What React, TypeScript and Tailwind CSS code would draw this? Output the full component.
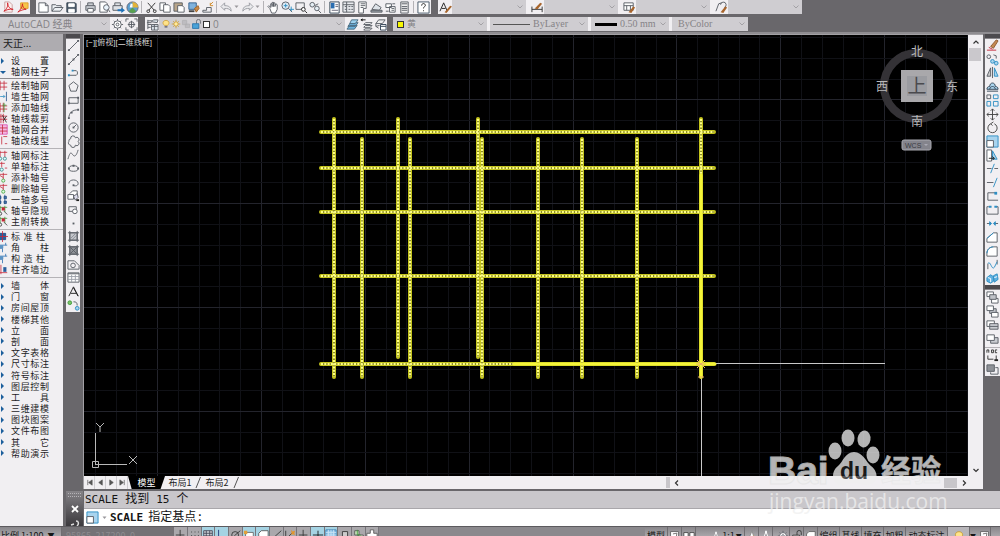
import React from "react";

type Shape = [d: string, stroke: string, fill?: string];

const K = "#5a5e66";
const B = "#2f8fc4";
const L = "#a9d4ee";
const R = "#c5283a";
const G = "#3f9a3a";
const N = "none";

// all drawn on a 14 x 14 grid
const icons: Record<string, Shape[]> = {
  pdf: [["M3 1h5l3 3v8H3z", "#c9a0a0", "#fbeeee"], ["M2 11c3-2 5-6 4-9 0 4 3 7 6 7-4-1-8 1-10 2z", "#d2232a", N]],
  pdfMail: [["M5 2h8v6H5z", "#e0a030", "#f6c64a"], ["M2 12c2-2 5-5 5-9 0 3 1 5 4 6-3 0-6 1-9 3", "#d2232a", N]],
  newFile: [["M2 2h7l3 3v7H2z", K, "#fff"], ["M9 2v3h3", K]],
  open: [["M1 11V4h4l1 1h5v2M1 11l3-4h9l-3 4z", K, "#eef1f4"]],
  save: [["M2 2h9l1 1v9H2z", "#34414f", "#52606e"], ["M4 3h6v3H4zM4 9h6v3H4z", "#fff", "#fff"]],
  print: [["M4 5V2h6v3M2 5h10v5H2z", K, "#c9ccd1"], ["M4 8h6v4H4z", K, "#fff"]],
  preview: [["M2 1h6l2 2v9H2z", K, "#fff"], ["M6 7a3 3 0 1 0 6 0a3 3 0 1 0-6 0M11 9l2 3", K, "#e8f2fa"]],
  publish: [["M3 5V2h6v3M1 5h10v5H1z", K, "#dfe2e6"], ["M6 9h4V7l4 3-4 3v-2H6z", N, "#1f72b8"]],
  pie: [["M1 7a6 6 0 1 0 12 0a6 6 0 1 0-12 0", "#667", "#5b9fd0"], ["M7 7V1a6 6 0 0 1 6 6z", N, "#e2b33a"], ["M7 7L3 11a6 6 0 0 0 8 0z", N, "#59a14f"], ["M5 3h2v4H4z", N, "#fff"]],
  cut: [["M3 2l7 8M11 2L4 10", "#333"], ["M2 11a1.500 1.500 0 1 0 3 0a1.500 1.500 0 1 0-3 0M9 11a1.500 1.500 0 1 0 3 0a1.500 1.500 0 1 0-3 0", "#333"]],
  copy: [["M1 2h6v8H1z", K, "#fff"], ["M5 4h5l2 2v6H5z", K, "#fff"]],
  paste: [["M1 2h9v9H1z", K, "#b9a58a"], ["M5 5h5l2 2v5H5z", K, "#fff"]],
  match: [["M2 2h8v7H2z", "#35618c", "#7fb2dd"], ["M2 10h6v2H2z", N, "#444"], ["M8 8l4-3 1 3-3 4z", "#a06428", "#c98a48"]],
  edit: [["M2 10h4V7h5v5H2z", K], ["M10 4l3-3M10 2v3h3", "#d08a28"]],
  undo: [["M1 6l4-4v3c5 0 7 2 7 6-2-3-4-3-7-3v2z", "#9a9da3", "#e9e9ec"]],
  redo: [["M13 6L9 2v3c-5 0-7 2-7 6 2-3 4-3 7-3v2z", "#9a9da3", "#e9e9ec"]],
  pan: [["M3 8L1 6l1-1 2 2V3h1.500v3V1.500H7V6V2h1.500v4l1-3L11 4v5l-2 4H5z", K, "#fff"]],
  zoom: [["M1 5a4 4 0 1 0 8 0a4 4 0 1 0-8 0M8 8l4 4", K, "#dcebf6"], ["M5 3v4M3 5h4M11 6v5M9 9h5", B]],
  zoomWin: [["M1 2h9v7H1z", K], ["M7 9a2 2 0 1 0 4 0a2 2 0 1 0-4 0M11 11l2 2", "#222", "#fff"]],
  zoomPrev: [["M1 4a2.500 2.500 0 1 0 5 0a2.500 2.500 0 1 0-5 0M6 8a2.500 2.500 0 1 0 5 0a2.500 2.500 0 1 0-5 0M10 10l3 3M6 5l4-2", K, "#e4edf4"]],
  props: [["M2 1h10v12H2z", "#345", "#fff"], ["M3 2h4v6H3z", N, "#2a6db0"], ["M8 4h3M8 6h3M4 10h7", "#667"]],
  center: [["M1 1h12v11H1z", K, "#e8eaee"], ["M1 4h12M3 6h2M7 6h2M10 6h2M3 9h2M7 9h2M10 9h2M5 1v11", K]],
  palette: [["M3 1h8v7H8v5H3z", K, "#fff"], ["M5 3h5M5 5h5M5 7h3", K]],
  sheets: [["M2 9l4-6 6 4-2 3z", K, "#dde2e8"], ["M1 10h12v2H1z", K, "#9aa0a8"]],
  markup: [["M2 3h6v4H2zM6 6h6v6H6z", K, "#fff"], ["M2 11h3M9 3h3M8 8h3M8 10h3", K]],
  calc: [["M3 1h8v12H3z", K, "#eee"], ["M4 3h6M4 6h6M4 8h6M4 10h6", K]],
  help: [["M1 1h12v12H1z", "#456", "#fff"], ["M5 5c0-3 4-3 4 0 0 1-2 1-2 3M7 10v1", "#222"]],
  textStyle: [["M1 11L5 2l4 9M3 8h4", "#222"], ["M6 12l6-7 2 1-6 7z", N, "#a8652c"]],
  dimStyle: [["M1 6v6M12 6v6M1 9h11", "#333"], ["M4 8l6-6 2 1-5 6z", N, "#a8652c"]],
  tableStyle: [["M1 2h10v8H1zM1 5h10M4 5v5M8 5v5", K, "#fff"], ["M6 12l5-6 2 1-4 6z", N, "#a8652c"]],
  leaderStyle: [["M1 11l3-8 3-1M6 4a3 3 0 1 1 4 3", K], ["M6 12l5-6 2 1-4 6z", N, "#a8652c"]],
  gear: [["M7 1v2M7 11v2M1 7h2M11 7h2M3 3l1 1M10 10l1 1M3 11l1-1M10 4l1-1", K], ["M3 7a4 4 0 1 0 8 0a4 4 0 1 0-8 0", K, "#fff"], ["M5.500 7a1.500 1.500 0 1 0 3 0a1.500 1.500 0 1 0-3 0", K]],
  gearFrame: [["M1 1h3M1 1v3M13 1h-3M13 1v3M1 13h3M1 13v-3M13 13h-3M13 13v-3", K], ["M4 7a3 3 0 1 0 6 0a3 3 0 1 0-6 0M7 3v8M3 7h8", K]],
  layers: [["M2 3h5M1 5h5M2 2v10M2 7h4M2 10h3", K], ["M6 4l2-2h5l-1 3zM6 7h7v6H6zM6 9h7M9 7v6", K, "#dfe7ee"]],
  layerCur: [["M1 12l3-4h8l-3 4zM2 9l3-4h8l-3 4z", "#4a6a80", "#6bb2dd"], ["M4 6l2-4h7l-3 4z", "#4a6a80", "#9bd0ee"]],
  layerPrev: [["M4 7l2-2h7l-2 2zM4 10l2-2h7l-2 2zM4 13l2-2h7l-2 2z", K, "#fff"], ["M1 2h5M1 2l2-1M1 2l2 1", "#111"]],
  layerState: [["M2 6l3-4h7l-3 4zM2 6v3l3 2M2 9l4-1", K, "#eee"], ["M7 7h6v6H7zM7 9h6", "#345", "#fff"]],
  bulb: [["M5 9c-4-3-2-7 2-7s6 4 2 7z", "#c99a2c", "#ffe38a"], ["M5 10h4v2H5z", N, "#667"]],
  sun: [["M7 1v12M1 7h12M3 3l8 8M11 3l-8 8", "#c99a2c"], ["M4 7a3 3 0 1 0 6 0a3 3 0 1 0-6 0", "#c99a2c", "#ffeaa0"]],
  freeze: [["M2 2h6v6H2zM6 7h6v5H6z", "#b0afb2", "#bdbcc0"]],
  unlock: [["M7 6V3a2.500 2.500 0 0 1 5 0v3", K], ["M2 6h8v6H2z", "#1e6ea8", "#4aa3d8"]],
  lockGray: [["M7 6V3a2.500 2.500 0 0 1 5 0v3", "#333"], ["M2 6h8v6H2z", "#333", "#ddd"]],
  line: [["M2 12L12 2", K], ["M1 11h2v2H1zM11 1h2v2h-2z", N, K]],
  xline: [["M2 12L12 2", K], ["M1 11h2v2H1zM6 6h2v2H6zM11 1h2v2h-2z", N, K]],
  pline: [["M2 10h8a3 3 0 0 0 0-5H6", K], ["M1 9h2v2H1zM5 4h2v2H5z", N, B]],
  polygon: [["M7 2l5 4-2 6H4L2 6z", K]],
  rect: [["M2 4h10v6H2z", K], ["M1 9h2v2H1zM11 3h2v2h-2z", N, K]],
  arc: [["M2 12c0-6 4-9 10-9", K], ["M1 11h2v2H1zM4 5h2v2H4zM11 2h2v2h-2z", N, K]],
  circle: [["M2 7a5 5 0 1 0 10 0a5 5 0 1 0-10 0M7 7l3-3", K], ["M6 6h2v2H6z", N, K]],
  cloud: [["M4 4a2.500 2.500 0 0 1 5-1 2.500 2.500 0 0 1 3 4 2.500 2.500 0 0 1-3 4 2.500 2.500 0 0 1-5 0 2.500 2.500 0 0 1-2-4 2.500 2.500 0 0 1 2-3z", K]],
  spline: [["M1 12c2-7 3-8 5-5s4 2 6-5", K]],
  ellipse: [["M2 7a5 3 0 1 0 10 0a5 3 0 1 0-10 0", K], ["M6 3h2v2H6zM1 6h2v2H1zM11 6h2v2h-2z", N, K]],
  ellArc: [["M2 8c0-5 10-5 10 0 0 3-4 3-5 2", K], ["M6 9h2v2H6z", N, K]],
  insert: [["M3 5l3-3h5v4M1 6h6v5H1z", K, "#fff"], ["M7 8l4-3 1 4-3 3z", K, "#dde"], ["M10 11h3v2h-3z", N, "#222"]],
  block: [["M2 4h8v5H2z", K], ["M6 9a2.500 2.500 0 1 0 5 0a2.500 2.500 0 1 0-5 0", K, "#fff"]],
  point: [["M6 6h2v2H6z", N, K]],
  hatch: [["M3 3h8v8H3z", K, "#c4c6cb"], ["M4 9l5-5M5 11l6-6", "#8b8f97"], ["M1 3h12M1 11h12M3 1v12M11 1v12", K]],
  gradient: [["M3 3h8v8H3z", K, "#8f9298"], ["M4 4l6 6M10 4l-6 6M1 3h12M1 11h12M3 1v12M11 1v12", K]],
  region: [["M1 12V3h7l5 5v4z", K], ["M4 8a2.500 2.500 0 1 0 5 0a2.500 2.500 0 1 0-5 0", K]],
  table: [["M1 2h12v10H1z", K, "#fff"], ["M1 3h12", K], ["M1 6h12M1 9h12M5 4v8M9 4v8", "#9b9fa7"]],
  mtext: [["M2 12L7 2l5 10M4 9h6M7 3l5 9", "#222"]],
  addSel: [["M1 4a2 2 0 1 0 4 0a2 2 0 1 0-4 0", G, "#7fc56a"], ["M9 10a2 2 0 1 0 4 0a2 2 0 1 0-4 0", B, L], ["M7 3c3 0 4 1 4 4", K]],
  erase: [["M5 8l6-7 2 1-5 8z", "#8d5a32", "#c58a52"], ["M3 9l4 2M1 12h10", R]],
  copyObj: [["M1 4a2 2 0 1 0 4 0a2 2 0 1 0-4 0M8 2l3 1v3", K], ["M5 9a2 2 0 1 0 4 0a2 2 0 1 0-4 0M9 11a2 2 0 1 0 4 0a2 2 0 1 0-4 0", B, L]],
  mirror: [["M5 2v9H1z", K, "#ccc"], ["M9 2v9h4z", B, L], ["M7 1v12", K]],
  offset: [["M1 10c0-2 1-3 3-3 0-5 6-5 6 0 2 0 3 1 3 3z", "#345", L], ["M4 10c0-4 6-4 6 0M1 12h12", "#345"]],
  array: [["M1 1h4v4H1z", K], ["M8 1h5v4H8zM1 8h4v5H1zM8 8h5v5H8z", B]],
  move: [["M7 1v12M1 7h12M5 3l2-2 2 2M5 11l2 2 2-2M3 5L1 7l2 2M11 5l2 2-2 2", "#444"]],
  rotate: [["M5 3a5 5 0 1 0 4 0M5 3l3-2M5 3l2 2", "#444"]],
  scale: [["M1 1h12v12H1z", B, L], ["M1 6h7v7H1z", K, "#fff"]],
  stretch: [["M1 1h5v12H1z", K, "#fff"], ["M7 2l5 9H7z", B, L], ["M3 10h6M7 8l2 2-2 2", "#222"]],
  trim: [["M5 12l4-10", B], ["M1 7h5M9 7h4", K]],
  extend: [["M8 12l4-10", B], ["M1 7h7", K]],
  breakPt: [["M11 3H2v8h11", K], ["M9 2h3v3H9z", N, B]],
  breakObj: [["M3 4H1v8h12V4h-2", K], ["M3 3h3v2H3zM9 3h3v2H9z", N, B]],
  join: [["M1 7h4M9 7h4", K], ["M4 5l2 2-2 2zM10 5L8 7l2 2z", B, B]],
  chamfer: [["M1 12V8l7-6h4v10z", K, "#fff"], ["M1 8l7-6", B]],
  fillet: [["M1 12V9c0-4 3-7 7-7h4v10z", K, "#fff"], ["M1 9c0-4 3-7 7-7", B]],
  blend: [["M2 12V6M12 7V2", K], ["M2 6c3-4 4 8 7 4l3-6", B]],
  explode: [["M1 6l4-3 3 2v5l-3 2-4-2zM8 4l4-2 1 6-4 3z", B, "#5fb0e0"], ["M2 6l3 1M5 7v4M9 6l3-1", "#fff"]],
  front: [["M1 1h7v5H1zM6 8h7v5H6z", K, "#fff"], ["M4 4h7v5H4z", K, "#bfc2c8"]],
  back: [["M4 4h7v5H4z", K, "#bfc2c8"], ["M1 1h7v5H1zM6 8h7v5H6z", K, "#fff"]],
  above: [["M1 2h8v6H1z", K, "#fff"], ["M4 5h9v6H4zM4 8h9", K, "#c9ccd1"]],
  under: [["M5 5h8v6H5z", K, "#c9ccd1"], ["M1 2h8v6H1z", K, "#fff"]],
  textFront: [["M1 4V1h2v3M6 1v3h2V1zM12 1h-2v3h2M2 7v4h6M11 7v5", "#333"], ["M9 11h4v2H9z", N, "#222"]],
  hatchBack: [["M1 2h8v7H1z", K, "#8f9298"], ["M10 5h3v7H5v-2", K]],
  // axis-grid commands
  axis: [["M1 4h12M1 9h12M4 1v12M9 1v12", R]],
  wallAxis: [["M3 1v12M12 1v12", "#234f86"], ["M4 7h6M8 5l2 2-2 2", B]],
  axisAdd: [["M1 5h12M1 9h12M4 1v12M8 1v12", R], ["M9 1v12M7 4h5", G]],
  axisCut: [["M1 4h12M1 8h12M5 1v12M8 1v12", R], ["M7 3l5 9M12 4l-4 6", "#222"]],
  axisMerge: [["M1 1h12v12H1z", "#d94bb0", "#f4b6e2"], ["M1 5h12M7 1v12M1 9h12", R]],
  axisType: [["M2 2v8l-1 2M6 2v10M8 2h5M10 11h3", R]],
  axisDim: [["M1 3h12M4 1v8M10 1v8", R], ["M2 11a2 2 0 1 0 4 0a2 2 0 1 0-4 0M8 11a2 2 0 1 0 4 0a2 2 0 1 0-4 0", "#2b7f86", "#dff"]],
  axisOne: [["M1 3h9M6 1v7M10 9h3", R], ["M4 11a2 2 0 1 0 4 0a2 2 0 1 0-4 0", "#2b7f86", "#dff"]],
  axisNo: [["M1 3h12M8 1v8M3 4l5 3", R], ["M6 11a2 2 0 1 0 4 0a2 2 0 1 0-4 0", G, "#dfd"]],
  axisMany: [["M2 3h3v3H2zM9 3h3v3H9zM2 9h3v3H2zM9 9h3v3H9z", "#234f86", "#5b83b8"], ["M4 1v12M10 1v12", "#234f86"]],
  axisHide: [["M1 3h12M4 1v8M10 1v8", G], ["M2 11a2 2 0 1 0 4 0a2 2 0 1 0-4 0M9 8l4 4", "#333"], ["M6 3h4v4H6z", N, R]],
  column: [["M3 3h8v8H3z", "#16457e", "#2a5f9e"], ["M7 0v14M0 7h14", R]],
  corner: [["M1 4h12M1 8h6v5M11 1v3", "#2a6db0"], ["M1 4h7v4H1z", N, "#5c93c4"]],
  colAlign: [["M5 1v12M0 11h13", R], ["M8 4h4v6H8z", N, "#2a5f9e"]],
  pad: [["M2 2h10v10H2z", "#445", "#cfd3da"], ["M2 5h10M2 8h10M5 2v10M9 2v10", "#445"]],
  snap: [["M6 1v11M1 7h10M9 10l3 3", "#333"]],
  dots: [["M3 3v1M7 3v1M11 3v1M3 7v1M7 7v1M11 7v1M3 11v1M7 11v1M11 11v1", "#333"]],
  ortho: [["M3 1v10h10", "#237"]],
  polar: [["M2 7a4 4 0 1 0 8 0a4 4 0 1 0-8 0M5 8l7-6", "#333"]],
  osnap: [["M3 4h9v9H3z", "#666", "#fff"], ["M1 2h4v4H1z", N, "#e3a13a"]],
  osnap3: [["M2 5l3-3h8v8l-3 3H2z", "#555", "#fff"]],
  angle: [["M12 2L2 11h10", "#333"]],
  ducs: [["M2 2v10l7-7", "#333"], ["M8 1l2 2 3-1-1 3 1 2-3-1-2 1 1-2z", N, "#e3952a"]],
  plus: [["M5 1h4v4h4v4H9v4H5V9H1V5h4z", "#555", "#fff"]],
  lwt: [["M7 2v10M1 7h12", "#111"]],
  paperGrid: [["M1 1h12v12H1z", "#3b7db0", "#8fc4e8"], ["M1 4h12M1 7h12M1 10h12M4 1v12M7 1v12M10 1v12", "#c9e3f4"]],
  quick: [["M4 3h6v10H4z", "#333", "#ccc"]],
  cycle: [["M2 2h5v5H2zM6 7h6v5H6z", "#555", "#cfe9c2"], ["M5 1v6h4", G]],
  layout: [["M2 2h10v10H2z", "#555", "#fff"], ["M5 5l5-1-1 7", "#555"]],
  views: [["M1 3h5v6H1zM8 3h5v6H8z", "#444", "#fff"]],
  person: [["M7 2l4 10M7 2L3 12M4 9h6", "#fff"], ["M6 1h2v3H6z", N, "#fff"]],
  star: [["M7 1l3 10H3z", "#888", "#fff"], ["M9 6l1 2 3 0-2 2 1 3-3-1-2 1 0-3-2-2h3z", N, "#edb13c"]],
};

function Icon({ name, className = "size-[13px]" }: { name: string; className?: string }) {
  return (
    <svg viewBox="0 0 14 14" className={`${className} shrink-0`} aria-hidden="true">
      {icons[name].map(([d, stroke, fill], i) => (
        <path key={i} d={d} stroke={stroke} fill={fill ?? "none"} strokeWidth="1" />
      ))}
    </svg>
  );
}

function Tool({ name }: { name: string }) {
  return (
    <button type="button" aria-label={name} className="flex h-[13px] w-[14px] shrink-0 items-center justify-center self-center">
      <Icon name={name} />
    </button>
  );
}

function Chevron({ className = "" }: { className?: string }) {
  return (
    <svg viewBox="0 0 8 6" className={`pointer-events-none h-[6px] w-[8px] shrink-0 ${className}`} aria-hidden="true">
      <path d="M1.500 1.500L4 4l2.500-2.500" stroke="#a3a1a5" fill="none" />
    </svg>
  );
}

function Caret() {
  return (
    <svg viewBox="0 0 7 4" className="h-[4px] w-[7px] shrink-0" aria-hidden="true">
      <path d="M1.500 0.500h4l-2 2.500z" fill="#9a989c" />
    </svg>
  );
}

const Sep = () => <span className="mx-[2px] h-[12px] w-px shrink-0 bg-[#b4b2b6]" />;

type ComboProps = { label: string; value?: string; className: string; children?: React.ReactNode };

function Combo({ label, value = "", className, children }: ComboProps) {
  return (
    <label className={`flex h-[14px] shrink-0 items-center bg-[#cfcdd1] pr-[2px] text-[#858387] ${className}`}>
      {children}
      <select aria-label={label} className="h-[14px] min-w-0 flex-1 appearance-none bg-transparent leading-[14px] outline-none">
        <option>{value}</option>
      </select>
      <Chevron />
    </label>
  );
}

const standardTools = [
  ["newFile", "open", "save"],
  ["print", "preview", "publish", "pie"],
  ["cut", "copy", "paste", "match", "edit"],
];
const drawTools = [
  "line", "xline", "pline", "polygon", "rect", "arc", "circle", "cloud", "spline", "ellipse",
  "ellArc", "insert", "block", "point", "hatch", "gradient", "region", "table", "mtext", "addSel",
];
const modifyTools = [
  "erase", "copyObj", "mirror", "offset", "array", "move", "rotate", "scale", "stretch",
  "trim", "extend", "breakPt", "breakObj", "join", "chamfer", "fillet", "blend", "explode",
];

function Toolbars() {
  return (
    <header className="flex h-[34px] shrink-0 flex-col gap-[3px] border-b-2 border-[#8f8d91] bg-[#69676b]">
      <div className="flex h-[14px]">
        <div className="flex w-[30px] shrink-0 items-center justify-between bg-[#f1eff2] px-px">
          <Tool name="pdf" />
          <Tool name="pdfMail" />
        </div>
        <div className="ml-[6px] flex w-[395px] shrink-0 items-center bg-[#f1eff2]">
          {standardTools.map((group) => (
            <React.Fragment key={group[0]}>
              {group.map((t) => <Tool key={t} name={t} />)}
              <Sep />
            </React.Fragment>
          ))}
          <Tool name="undo" />
          <Caret />
          <Tool name="redo" />
          <Caret />
          <Sep />
          {["pan", "zoom", "zoomWin", "zoomPrev"].map((t) => <Tool key={t} name={t} />)}
          <Sep />
          {["props", "center", "palette", "sheets", "markup", "calc"].map((t) => <Tool key={t} name={t} />)}
          <Sep />
          <Tool name="help" />
        </div>
        <div className="ml-[7px] flex shrink-0 items-center bg-[#f1eff2]">
          <Tool name="textStyle" />
          <Combo label="Text style" className="w-[74px]" />
          <span className="w-[4px]" />
          <Tool name="dimStyle" />
          <Combo label="Dimension style" className="w-[74px]" />
          <span className="w-[4px]" />
          <Tool name="tableStyle" />
          <Combo label="Table style" className="w-[74px]" />
          <span className="w-[4px]" />
          <Tool name="leaderStyle" />
          <Combo label="Multileader style" className="w-[74px]" />
        </div>
      </div>
      <div className="flex h-[14px] text-[10px]">
        <div className="flex shrink-0 bg-[#f1eff2]">
          <Combo label="Workspace" value="AutoCAD 经典" className="w-[110px] pl-[8px] font-['Open_Sans','Noto_Sans_CJK_SC',sans-serif]" />
          <Tool name="gear" />
          <Tool name="gearFrame" />
        </div>
        <div className="ml-[7px] flex shrink-0 bg-[#f1eff2]">
          <Tool name="layers" />
          <Combo label="Layer" value="0" className="w-[186px] pl-[2px] font-['Open_Sans',sans-serif]">
            <Icon name="bulb" className="size-[10px]" />
            <Icon name="sun" className="size-[10px]" />
            <Icon name="freeze" className="size-[10px]" />
            <Icon name="unlock" className="size-[11px]" />
            <span className="mr-[3px] ml-px size-[7px] border border-[#333] bg-white" />
          </Combo>
          <Tool name="layerCur" />
          <Tool name="layerPrev" />
          <Tool name="layerState" />
        </div>
        <div className="ml-[6px] flex shrink-0 gap-[3px] bg-[#f1eff2] font-['Liberation_Serif','Noto_Sans_CJK_SC',serif]">
          <Combo label="Color" value="黄" className="w-[94px] pl-[4px] text-[9px]">
            <span className="mr-[3px] size-[7px] border border-[#333] bg-[#f7f700]" />
          </Combo>
          <Combo label="Linetype" value="ByLayer" className="w-[98px] pl-[3px]">
            <span className="mr-[3px] h-px w-[37px] bg-[#555]" />
          </Combo>
          <Combo label="Lineweight" value="0.50 mm" className="w-[78px] pl-[4px]">
            <span className="mr-[3px] h-[3px] w-[22px] bg-black" />
          </Combo>
          <Combo label="Plot style" value="ByColor" className="w-[76px] pl-[6px]" />
        </div>
      </div>
    </header>
  );
}

const commandGroups = [
  [["axis", "绘制轴网"], ["wallAxis", "墙生轴网"], ["axisAdd", "添加轴线"], ["axisCut", "轴线裁剪"], ["axisMerge", "轴网合并"], ["axisType", "轴改线型"]],
  [["axisDim", "轴网标注"], ["axisOne", "单轴标注"], ["axisNo", "添补轴号"], ["axisNo", "删除轴号"], ["axisMany", "一轴多号"], ["axisHide", "轴号隐现"], ["axisHide", "主附转换"]],
  [["column", "标准柱"], ["corner", "角柱"], ["corner", "构造柱"], ["colAlign", "柱齐墙边"]],
];
const menus = [
  "墙体", "门窗", "房间屋顶", "楼梯其他", "立面", "剖面", "文字表格", "尺寸标注",
  "符号标注", "图层控制", "工具", "三维建模", "图块图案", "文件布图", "其它", "帮助演示",
];

function PaletteRow({ label, icon, open }: { label: string; icon?: string; open?: boolean }) {
  return (
    <button type="button" aria-label={label} className="flex h-[11px] w-full items-center leading-[11px]">
      <span className="flex w-[11px] shrink-0 items-center">
        {icon ? (
          <Icon name={icon} className="-ml-[3px] size-[11px]" />
        ) : (
          <svg viewBox="0 0 6 6" className="size-[6px]" aria-hidden="true">
            <path d={open ? "M0 2h6L3 5z" : "M1 0v6l3-3z"} fill="#1c5f9c" />
          </svg>
        )}
      </span>
      <span className={label.length === 3 ? "flex w-[34px] justify-between" : "flex w-[38px] justify-between"}>
        {[...label].map((c, i) => <span key={i}>{c}</span>)}
      </span>
    </button>
  );
}

function CommandPalette() {
  return (
    <aside className="w-[63px] shrink-0 bg-[#f1eff2] font-['Noto_Sans_CJK_SC',sans-serif] text-[9px] text-[#1d1d1f]">
      <h2 className="flex h-[17px] items-center bg-[#aeacb0] pl-[3px] text-[10px]">天正...</h2>
      <div className="border-b border-[#8d8b8f] pt-[4px] pb-px">
        <PaletteRow label="设置" />
        <PaletteRow label="轴网柱子" open />
      </div>
      {commandGroups.map((group) => (
        <div key={group[0][1]} className="border-b border-[#b5b3b7] pt-px pb-[2px]">
          {group.map(([icon, label]) => <PaletteRow key={label} icon={icon} label={label} />)}
        </div>
      ))}
      <nav className="flex h-[181px] flex-col justify-between pt-[2px]">
        {menus.map((m) => <PaletteRow key={m} label={m} />)}
      </nav>
    </aside>
  );
}

const Grip = () => <span className="h-[5px] shrink-0 border-b border-[#8a888c] bg-[#4c4a4e]" />;

// axis lines: [x, top, bottom] and [y]
const columns = [
  [250, 84, 342], [278, 104, 342], [314, 84, 322], [326, 104, 342], [394, 84, 322],
  [398, 104, 342], [454, 104, 342], [498, 104, 342], [553, 104, 342], [617, 84, 342],
];
const rows = [97, 133, 177, 241, 329];
const gridStep = 20.77;

function Drawing() {
  const axes = [
    ...columns.map(([x, a, b]) => `M${x} ${a}V${b}`),
    ...rows.map((y) => `M237 ${y}H630`),
  ].join("");
  return (
    <svg className="block h-full w-full" aria-label="Drawing area">
      <g shapeRendering="crispEdges">
        {Array.from({ length: 90 }, (_, i) => (
          <rect key={`v${i}`} x={Math.round(10.8 + i * gridStep)} y="0" width="1" height="100%" fill={i % 5 === 3 ? "#23242c" : "#101116"} />
        ))}
        {Array.from({ length: 60 }, (_, i) => (
          <rect key={`h${i}`} x="0" y={Math.round(2 + i * gridStep)} width="100%" height="1" fill={i % 5 === 3 ? "#23242c" : "#101116"} />
        ))}
        <rect x="617" y="342" width="1" height="100%" fill="#c9c9c9" />
        <rect x="631" y="328" width="170" height="1" fill="#c9c9c9" />
      </g>
      <g fill="none">
        <path d={axes} stroke="#c4c41c" strokeWidth="4" strokeLinecap="round" />
        <path d={axes} stroke="#8c8c2c" strokeWidth="2" />
        <path d={axes} stroke="#ffff84" strokeWidth="2" strokeDasharray="2 1.300" />
        <path d="M617 140V342M430 329H631" stroke="#f5f53a" strokeWidth="3" strokeLinecap="round" />
        <path d="M613 325l8 8M621 325l-8 8M612 329h10M614 342h6" stroke="#e8b06a" />
      </g>
    </svg>
  );
}

function ViewCube() {
  return (
    <svg viewBox="0 0 90 112" className="absolute top-[6px] right-[6px] h-[112px] w-[90px]" aria-label="ViewCube">
      <circle cx="45" cy="45" r="33" fill="none" stroke="#343236" strokeWidth="8" />
      <path d="M29 29h32v32H29z" fill="#a9a8ab" />
      <path d="M35 35h20v20H35z" fill="#9b9ca1" />
      <g fontFamily="'Noto Sans CJK SC', sans-serif" textAnchor="middle" fill="#b9b9bb" fontSize="12">
        <text x="45" y="15">北</text>
        <text x="10" y="50">西</text>
        <text x="80" y="50">东</text>
        <text x="45" y="85">南</text>
        <text x="45" y="52" fontSize="19" fill="#4a4a4e">上</text>
      </g>
      <rect x="30" y="99" width="29" height="10" rx="2" fill="#84848c" stroke="#a9a9b0" />
      <text x="33" y="107" fontSize="7" fontFamily="'Liberation Sans', sans-serif" fill="#3b3b42">WCS</text>
      <path d="M52 103h4l-2 2z" fill="#a9a9b4" />
    </svg>
  );
}

function Ucs() {
  return (
    <svg viewBox="0 0 50 50" className="absolute bottom-[3px] left-[7px] size-[50px]" aria-label="UCS" fill="none" stroke="#b9b9b9">
      <path d="M4.500 10v32M4.500 41.500H36M1.500 38.500h6v6h-6zM5 0l4 4 4-4M9 4v5M38 33l8 8M46 33l-8 8" />
    </svg>
  );
}

function ScrollArrow({ d, label, className = "" }: { d: string; label: string; className?: string }) {
  return (
    <button type="button" aria-label={label} className={`flex h-[13px] w-[13px] shrink-0 items-center justify-center ${className}`}>
      <svg viewBox="0 0 8 8" className="size-[8px]" aria-hidden="true">
        <path d={d} fill="none" stroke="#333" strokeWidth="1.200" />
      </svg>
    </button>
  );
}

const Slash = () => (
  <svg viewBox="0 0 6 13" className="h-[13px] w-[6px] shrink-0" aria-hidden="true">
    <path d="M5.500 1L1 12" stroke="#555" fill="none" />
  </svg>
);

function LayoutTabs() {
  const arrows = ["M2 1v6M7 1L3 4l4 3z", "M6 1L2 4l4 3z", "M2 1l4 3-4 3z", "M6 1v6M1 1l4 3-4 3z"];
  return (
    <div className="flex h-[13px] shrink-0 items-center bg-[#f1eff2] font-['Noto_Sans_CJK_SC',sans-serif] text-[9px] leading-[13px] text-[#222]">
      {arrows.map((d, i) => (
        <button key={i} type="button" aria-label={`Scroll tabs ${i + 1}`} className="flex h-[13px] w-[11px] shrink-0 items-center justify-center border-r border-[#cfcdd1]">
          <svg viewBox="0 0 8 8" className="size-[7px]" aria-hidden="true">
            <path d={d} fill="#555" stroke="#555" strokeWidth="0.800" />
          </svg>
        </button>
      ))}
      <button type="button" className="h-[13px] w-[37px] shrink-0 bg-black text-white [clip-path:polygon(0_0,100%_0,88%_100%,10%_100%)]">模型</button>
      <button type="button" className="w-[30px] shrink-0 text-center">布局1</button>
      <Slash />
      <button type="button" className="w-[32px] shrink-0 text-center">布局2</button>
      <Slash />
      <span className="flex-[434]" />
      <span className="h-[11px] w-[4px] bg-[#c8c6ca]" />
      <div className="flex flex-[304] items-center justify-between pr-[13px] pl-[1px]">
        <ScrollArrow label="Scroll left" d="M5 1.500L2.500 4 5 6.500" />
        <span className="flex">
          <span className="h-[10px] w-[13px] self-center bg-[#c8c6ca]" />
          <ScrollArrow label="Scroll right" d="M3 1.500L5.500 4 3 6.500" />
        </span>
      </div>
    </div>
  );
}

function CommandLine() {
  return (
    <section className="flex h-[35px] shrink-0 font-['DejaVu_Sans_Mono','Noto_Sans_CJK_SC',monospace] text-[11px] text-[#141414]">
      <div className="flex w-[17px] shrink-0 flex-col items-center justify-between bg-linear-to-b from-[#858387] to-[#3c3a3e] pt-[2px]">
        <span className="h-[4px] w-[13px] border-y border-dotted border-[#b5b3b7]" />
        <button type="button" aria-label="Close command line" className="flex size-[12px] items-center justify-center">
          <svg viewBox="0 0 8 8" className="size-[8px]"><path d="M1 1l6 6M7 1L1 7" stroke="#fff" strokeWidth="1.800" /></svg>
        </button>
        <button type="button" aria-label="Customize" className="flex h-[6px] items-center justify-center">
          <svg viewBox="0 0 10 6" className="h-[6px] w-[10px]"><path d="M1 5l3-1M6 1c3 0 3 3 1 5" fill="none" stroke="#ddd" strokeWidth="1.500" /></svg>
        </button>
      </div>
      <div className="ml-px flex min-w-0 flex-1 flex-col leading-[17px]">
        <div className="flex h-[18px] items-center gap-[7px] border-b border-[#a9a7ab] bg-[#c9c7cb] pl-px whitespace-nowrap">
          <span>SCALE</span>
          <span className="text-[12px]">找到</span>
          <span>15</span>
          <span className="text-[12px]">个</span>
        </div>
        <label className="flex h-[17px] items-center bg-white pl-[2px] whitespace-nowrap">
          <Icon name="scale" className="size-[13px]" />
          <span className="mx-[2px]"><Caret /></span>
          <span className="font-bold">SCALE</span>
          <span className="ml-[5px] text-[12px]">指定基点:</span>
          <input aria-label="Command" className="h-[15px] min-w-0 flex-1 bg-transparent pl-1 outline-none" />
        </label>
      </div>
    </section>
  );
}

const toggles: [string, boolean][] = [
  ["snap", false], ["dots", false], ["pad", true], ["ortho", true], ["polar", false],
  ["osnap", true], ["osnap3", true], ["angle", false], ["ducs", false], ["snap", false],
  ["lwt", true], ["paperGrid", true], ["quick", false], ["cycle", false], ["plus", false],
];

function StatusButton({ children, className = "" }: { children: React.ReactNode; className?: string }) {
  return (
    <button type="button" className={`flex h-[17px] shrink-0 items-center justify-center border-r border-[#6f6d71] ${className}`}>
      {children}
    </button>
  );
}

function StatusBar() {
  return (
    <footer className="flex h-[10px] shrink-0 items-start overflow-hidden border-t border-[#5c5a5e] bg-linear-to-b from-[#88868a] to-[#a8a6aa] font-['Noto_Sans_CJK_SC',sans-serif] text-[9px] leading-[17px] text-[#161616]">
      <StatusButton className="w-[62px] justify-start! gap-[4px] border-0 pl-px">
        <span>比例 1:100</span>
        <span className="text-[7px]">▼</span>
      </StatusButton>
      <span className="h-[17px] w-[112px] shrink-0 bg-[#747276] pl-[4px] text-[#8d8b8f]">95865, 217200, 0</span>
      <div className="flex shrink-0">
        {toggles.map(([name, on], i) => (
          <button
            key={i}
            type="button"
            aria-label={name}
            aria-pressed={on}
            className={`flex h-[15px] w-[14px] items-center justify-center border-r border-[#77757a] nth-[3n]:w-[13px] ${on ? "bg-[#a5d3e3]" : "bg-[#aaa8ac]"}`}
          >
            <Icon name={name} className="size-[12px]" />
          </button>
        ))}
      </div>
      <span className="flex-1 self-stretch bg-[#8b898d]" />
      <StatusButton className="w-[23px]">模型</StatusButton>
      <StatusButton className="w-[14px]"><Icon name="layout" className="size-[11px]" /></StatusButton>
      <StatusButton className="w-[14px]"><Icon name="views" className="size-[12px]" /></StatusButton>
      <span className="w-[13px] shrink-0" />
      <StatusButton className="w-[36px] gap-[1px]">
        <Icon name="person" className="size-[10px]" />
        <span>1:1</span>
        <span className="text-[6px]">▼</span>
      </StatusButton>
      <StatusButton className="w-[14px]"><Icon name="star" className="size-[12px]" /></StatusButton>
      <StatusButton className="w-[14px]"><Icon name="person" className="size-[12px]" /></StatusButton>
      <span className="w-[3px] shrink-0" />
      <StatusButton className="w-[14px]"><Icon name="gear" className="size-[12px]" /></StatusButton>
      <StatusButton className="w-[14px]"><Icon name="lockGray" className="size-[12px]" /></StatusButton>
      <StatusButton className="w-[14px]"><Icon name="osnap3" className="size-[11px]" /></StatusButton>
      {["编组", "基线", "填充", "加粗"].map((t) => <StatusButton key={t} className="w-[22px]">{t}</StatusButton>)}
      <StatusButton className="w-[42px]">动态标注</StatusButton>
      <StatusButton className="w-[22px] bg-[#b8b6ba]"><Icon name="bulb" className="size-[12px]" /></StatusButton>
      <span className="w-[9px] shrink-0 text-[6px]">▼</span>
      <StatusButton className="w-[12px]"><Icon name="layout" className="size-[11px]" /></StatusButton>
      <span className="w-[9px] shrink-0" />
    </footer>
  );
}

function Watermark() {
  return (
    <svg viewBox="0 0 184 90" className="pointer-events-none absolute right-[51px] bottom-[20px] h-[90px] w-[184px] opacity-75" aria-hidden="true">
      <g fill="#f0f0f0">
        <g stroke="#e4e4e4">
          <text x="3" y="58" fontSize="39" fontWeight="700" fontFamily="'Liberation Sans', sans-serif">Bai</text>
          <text x="116" y="55" fontSize="30" fontWeight="700" strokeWidth="0.500" fontFamily="'Noto Sans CJK SC', sans-serif">经验</text>
        </g>
        <ellipse cx="70" cy="25" rx="6.500" ry="8.500" />
        <ellipse cx="83" cy="12" rx="6.500" ry="8.500" />
        <ellipse cx="99" cy="13" rx="6.500" ry="8.500" transform="rotate(8 99 13)" />
        <ellipse cx="108" cy="29" rx="6.500" ry="8.500" />
        <path d="M89 26c-9 0-11 10-16 14-8 6-6 19 4 19 5 0 8-2 12-2s7 2 12 2c12 0 14-12 5-19-5-4-8-14-17-14z" />
        <text x="4" y="83" fontSize="21" fontFamily="'Open Sans', sans-serif">jingyan.baidu.com</text>
      </g>
      <text x="89" y="53" fontSize="23" fontWeight="700" fontFamily="'Liberation Sans', sans-serif" textAnchor="middle" fill="#202020">du</text>
    </svg>
  );
}

export default function App() {
  return (
    <div className="relative flex h-screen flex-col overflow-hidden bg-[#69676b]">
      <Toolbars />
      <div className="flex min-h-0 flex-1 gap-[3px]">
        <CommandPalette />
        <div className="flex min-w-0 flex-1 flex-col">
          <main className="flex min-h-0 flex-1">
            <div className="flex w-[14px] shrink-0 flex-col self-start bg-[#f1eff2]">
              <Grip />
              <div className="flex h-[273px] flex-col justify-between">
                {drawTools.map((t) => <Tool key={t} name={t} />)}
              </div>
            </div>
            <div className="mr-[2px] ml-[3px] flex min-w-0 flex-1 flex-col border-t border-l border-[#a3a1a5]">
              <div className="flex min-h-0 flex-1">
                <div className="relative min-w-0 flex-1 overflow-hidden bg-black">
                  <Drawing />
                  <span className="absolute top-[2px] left-[2px] font-['Liberation_Sans','Noto_Sans_CJK_SC',sans-serif] text-[8px] leading-[12px] text-[#d5d5d5]">[−][俯视][二维线框]</span>
                  <ViewCube />
                  <Ucs />
                </div>
                <div className="flex w-[15px] shrink-0 flex-col items-center justify-between bg-[#f1eff2]">
                  <div>
                    <ScrollArrow label="Scroll up" d="M1.500 5.500L4 3l2.500 2.500" />
                    <span className="block h-[13px] w-[12px] bg-[#cac8cc]" />
                  </div>
                  <ScrollArrow label="Scroll down" d="M1.500 3L4 5.500 6.500 3" />
                </div>
              </div>
              <LayoutTabs />
            </div>
            <div className="flex w-[15px] shrink-0 flex-col self-start bg-[#f1eff2]">
              <Grip />
              <div className="flex h-[246px] flex-col justify-between">
                {modifyTools.map((t) => <Tool key={t} name={t} />)}
              </div>
              <Grip />
              <div className="flex flex-col gap-px pt-px">
                {["front", "back", "above", "under"].map((t) => <Tool key={t} name={t} />)}
                <span className="h-px bg-[#b4b2b6]" />
                <Tool name="textFront" />
                <Tool name="hatchBack" />
              </div>
            </div>
          </main>
          <span className="h-[2px] shrink-0" />
          <CommandLine />
        </div>
      </div>
      <StatusBar />
      <Watermark />
    </div>
  );
}
